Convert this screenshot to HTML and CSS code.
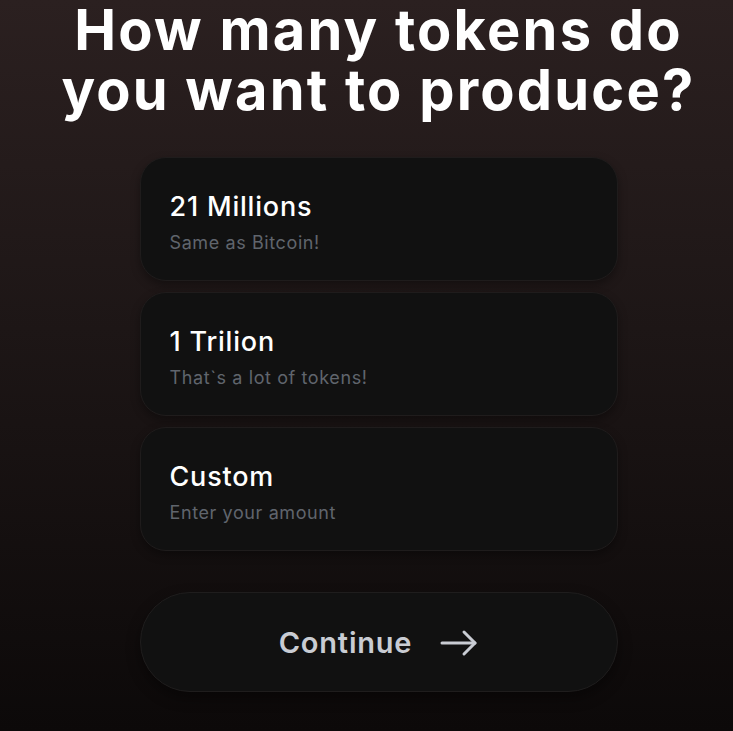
FILE: index.html
```html
<!DOCTYPE html>
<html lang="en">
<head>
<meta charset="utf-8">
<link rel="stylesheet" href="styles.css">
</head>
<body>
<main class="page">
  <h1 class="title">How many tokens do<br>you want to produce?</h1>
  <div class="options">
    <div class="card">
      <div class="card-title">21 Millions</div>
      <div class="card-sub">Same as Bitcoin!</div>
    </div>
    <div class="card">
      <div class="card-title">1 Trilion</div>
      <div class="card-sub">That`s a lot of tokens!</div>
    </div>
    <div class="card">
      <div class="card-title">Custom</div>
      <div class="card-sub">Enter your amount</div>
    </div>
  </div>
  <button class="continue">
    <span>Continue</span>
    <svg class="arrow" width="38" height="28" viewBox="0 0 38 28" fill="none" stroke="currentColor" stroke-width="3" stroke-linecap="round" stroke-linejoin="round">
      <path d="M2 14H35"/>
      <path d="M24 3L35 14L24 25"/>
    </svg>
  </button>
</main>
</body>
</html>
```
FILE: styles.css
```css
html, body {
  margin: 0;
  height: 100%;
}
body {
  background: linear-gradient(180deg, #2b2020 0%, #1d1616 45%, #0c0909 100%);
  font-family: Inter, "Noto Sans", sans-serif;
  color: #fff;
  overflow: hidden;
}
.page {
  padding-left: 24px;
  display: flex;
  flex-direction: column;
  align-items: center;
}
.title {
  margin: 0;
  font-size: 56px;
  line-height: 60px;
  font-weight: 700;
  text-align: center;
  letter-spacing: 2.2px;
}
.options {
  margin-top: 37px;
  width: 478px;
  display: flex;
  flex-direction: column;
  gap: 11px;
}
.card {
  box-sizing: border-box;
  height: 124px;
  border-radius: 26px;
  background: #111111;
  border: 1px solid #1f1c1c;
  box-shadow: 0 4px 10px rgba(0,0,0,0.35);
  padding: 32px 29px 0;
}
.card-title {
  font-size: 27px;
  line-height: 34px;
  font-weight: 500;
  letter-spacing: 0.8px;
  color: #ffffff;
}
.card-sub {
  margin-top: 7px;
  font-size: 18px;
  line-height: 24px;
  letter-spacing: 0.6px;
  color: #60656d;
}
.continue {
  margin-top: 41px;
  width: 478px;
  height: 100px;
  border-radius: 50px;
  background: #111111;
  border: 1px solid #1f1d1d;
  box-shadow: 0 6px 14px rgba(0,0,0,0.4);
  display: flex;
  align-items: center;
  justify-content: center;
  gap: 28px;
  font-family: Inter, "Noto Sans", sans-serif;
  font-size: 29px;
  font-weight: 600;
  letter-spacing: 0.8px;
  color: #c9ccd3;
  padding: 0;
}
.arrow {
  display: block;
  margin-top: 2px;
}
```
